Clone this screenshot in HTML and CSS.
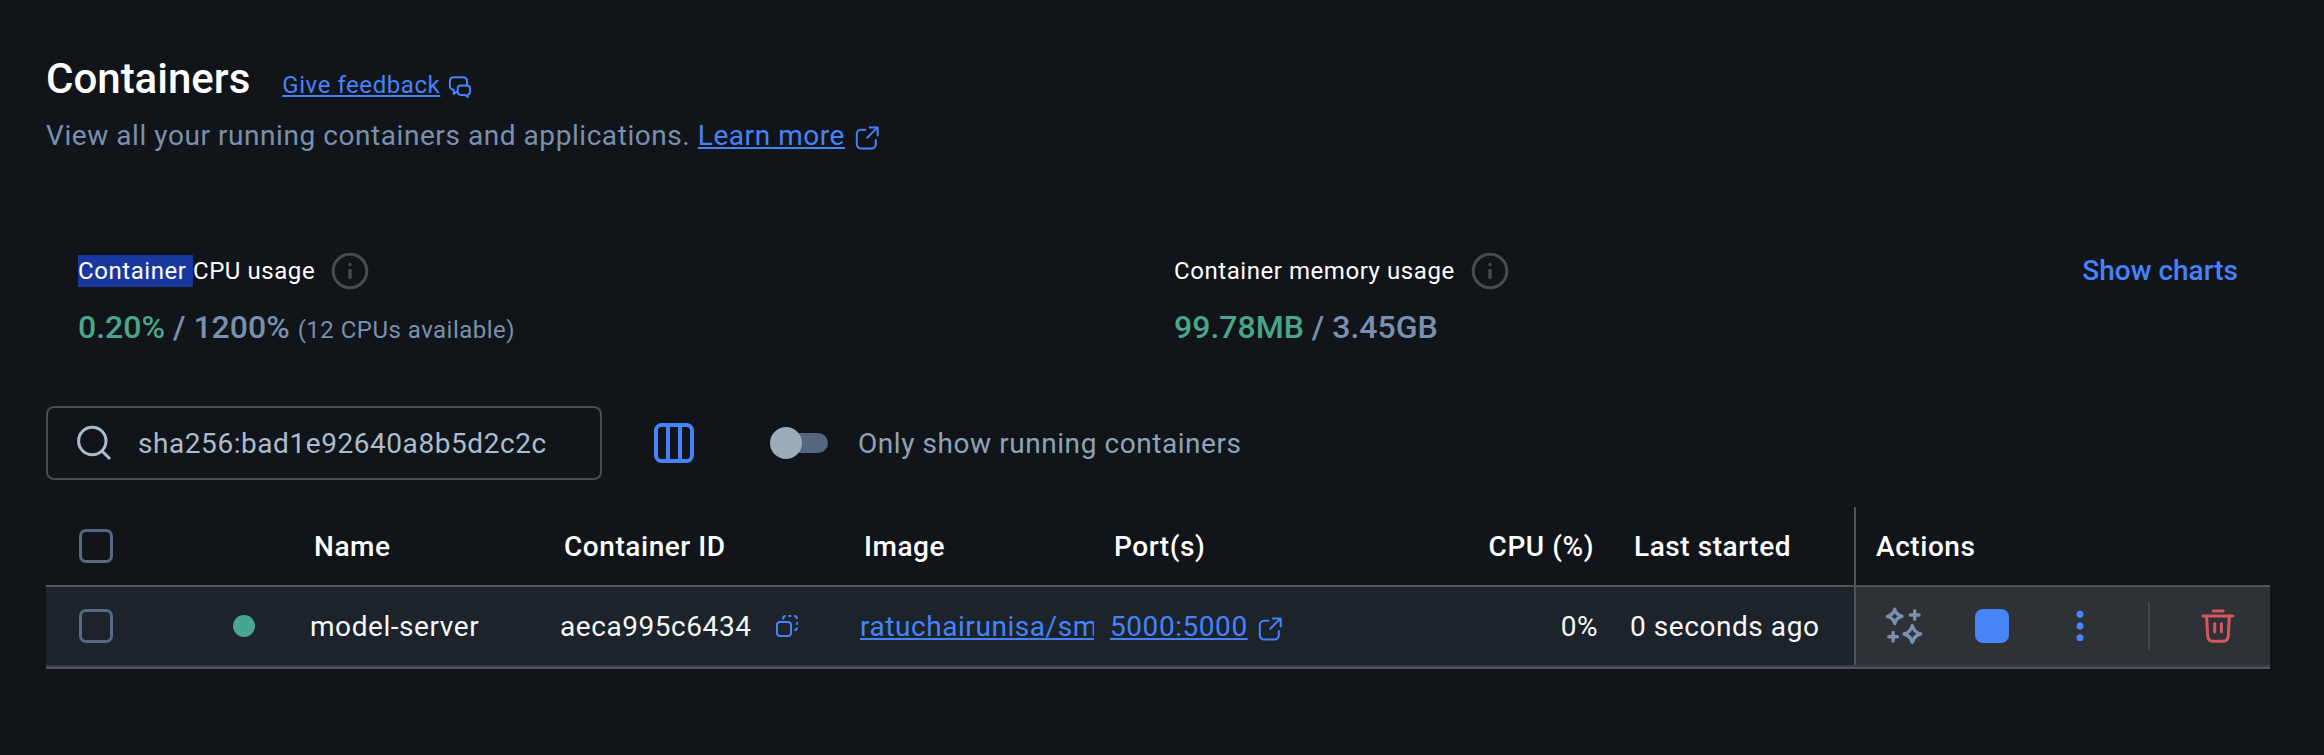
FILE: index.html
```html
<!DOCTYPE html>
<html lang="en">
<head>
<meta charset="utf-8">
<title>Containers</title>
<link rel="stylesheet" href="styles.css">
</head>
<body>
<main class="page">
  <header class="header">
    <div class="title-row">
      <h1 class="title">Containers</h1>
      <a class="link feedback">Give feedback</a>
      <svg class="icon-feedback" viewBox="0 0 24 24" width="24" height="24"><path d="M9 16.5 L5.7 19 V14.8 C3 14.4 1.9 13 1.9 11 V6.2 C1.9 3.5 3.3 2.2 6 2.2 H14.8 C17.6 2.2 19 3.5 19 6.2 V9.8 M12.7 10.6 H19 C21.2 10.6 22.1 11.7 22.1 13.6 V16.6 C22.1 18.5 21.4 19.4 19.8 19.7 V22 L16.8 19.9 H12.7 C10.6 19.9 9.7 18.8 9.7 16.8 V13.6 C9.7 11.7 10.6 10.6 12.7 10.6 Z"/></svg>
    </div>
    <p class="subtitle">View all your running containers and applications. <a class="link">Learn more</a><svg class="icon-ext" viewBox="0 0 24 24" width="24" height="24"><path d="M10.5 3.8H6a4.2 4.2 0 0 0-4.2 4.2v10.2A4.2 4.2 0 0 0 6 22.4h10.6a4.2 4.2 0 0 0 4.2-4.2V14M12.2 11.8 22.4 1.6M14.8 1.4h7.9v8.2"/></svg></p>
  </header>

  <section class="usage">
    <div class="metric">
      <div class="metric-label"><span><mark class="selected">Container </mark>CPU usage</span><svg class="icon-info" viewBox="0 0 40 40" width="40" height="40"><circle cx="20" cy="20" r="16.8"/><path d="M20 19.5v7M20 13.5v.1"/></svg></div>
      <div class="metric-value"><span class="used">0.20%</span> / 1200% <small class="note">(12 CPUs available)</small></div>
    </div>
    <div class="metric">
      <div class="metric-label"><span>Container memory usage</span><svg class="icon-info" viewBox="0 0 40 40" width="40" height="40"><circle cx="20" cy="20" r="16.8"/><path d="M20 19.5v7M20 13.5v.1"/></svg></div>
      <div class="metric-value"><span class="used">99.78MB</span> / 3.45GB</div>
    </div>
    <a class="show-charts">Show charts</a>
  </section>

  <section class="toolbar">
    <div class="search">
      <svg class="icon-search" viewBox="0 0 36 36" width="36" height="36"><circle cx="16.3" cy="16" r="13.7"/><path d="M26 26l8 8"/></svg>
      <span>sha256:bad1e92640a8b5d2c2c</span>
    </div>
    <svg class="icon-columns" viewBox="0 0 40 40" width="40" height="40"><rect x="2" y="2" width="36" height="36" rx="5.5"/><path d="M14 2v36M26 2v36"/></svg>
    <div class="switch"><span class="thumb"></span></div>
    <span class="switch-label">Only show running containers</span>
  </section>

  <section class="table">
    <div class="row head">
      <div class="cell"><span class="checkbox"></span></div>
      <div class="cell"></div>
      <div class="cell">Name</div>
      <div class="cell">Container ID</div>
      <div class="cell">Image</div>
      <div class="cell">Port(s)</div>
      <div class="cell right">CPU (%)</div>
      <div class="cell">Last started</div>
      <div class="cell actions">Actions</div>
    </div>
    <div class="row item">
      <div class="cell"><span class="checkbox"></span></div>
      <div class="cell"><span class="status"></span></div>
      <div class="cell">model-server</div>
      <div class="cell">aeca995c6434<svg class="icon-copy" viewBox="0 0 24 24" width="24" height="24"><rect x="2" y="8" width="14" height="14" rx="3"/><path d="M8 5.5V4.8Q8 2 10.7 2M13.4 2h2.8M19 2Q22 2 22 5M22 8v2.8M22 13.4Q22 16 19.3 16"/></svg></div>
      <div class="cell image"><a class="link">ratuchairunisa/sm</a></div>
      <div class="cell"><a class="link">5000:5000</a><svg class="icon-ext" viewBox="0 0 24 24" width="24" height="24"><path d="M10.5 3.8H6a4.2 4.2 0 0 0-4.2 4.2v10.2A4.2 4.2 0 0 0 6 22.4h10.6a4.2 4.2 0 0 0 4.2-4.2V14M12.2 11.8 22.4 1.6M14.8 1.4h7.9v8.2"/></svg></div>
      <div class="cell right">0%</div>
      <div class="cell">0 seconds ago</div>
      <div class="cell actions">
        <svg class="icon-sparkle" viewBox="0 0 38 38" width="38" height="38"><path d="M9.7 2.2Q11 8 17 9.4Q11 10.8 9.7 16.6Q8.4 10.8 2.4 9.4Q8.4 8 9.7 2.2ZM27.3 18.6Q29 25.2 35.5 27Q29 28.8 27.3 35.4Q25.6 28.8 19.1 27Q25.6 25.2 27.3 18.6ZM29.7 3.7v8.6M25.4 8H34M8.1 25.5v8.6M3.8 29.8h8.6"/></svg>
        <span class="stop"></span>
        <svg class="icon-more" viewBox="0 0 8 34" width="8" height="34"><circle cx="4" cy="5.3" r="3.5"/><circle cx="4" cy="17" r="3.5"/><circle cx="4" cy="28.7" r="3.5"/></svg>
        <span class="divider"></span>
        <svg class="icon-trash" viewBox="0 0 34 34" width="34" height="34"><path d="M12.2 1.9h10M2 7h30M5.6 7l1 19.6Q7 32.2 12 32.2h10Q27 32.2 27.3 26.6L28.3 7M13.7 14.5v8.3M20.4 14.5v8.3"/></svg>
      </div>
    </div>
  </section>
</main>
</body>
</html>
```
FILE: styles.css
```css
* { box-sizing: border-box; }

body {
  margin: 0;
  background: #111519;
  color: #fff;
  font-family: Roboto, sans-serif;
  font-size: 28px;
  letter-spacing: 0.02em;
}

svg {
  display: block;
  flex: none;
  fill: none;
  stroke: #4583fa;
  stroke-width: 2;
  stroke-linecap: round;
  stroke-linejoin: round;
}

.page {
  width: 2324px;
  height: 755px;
  padding: 51px 54px 0 46px;
  overflow: hidden;
}

.link {
  color: #4583fa;
  text-decoration: underline;
  text-decoration-thickness: 2px;
  text-decoration-skip-ink: none;
  text-underline-offset: 2px;
}

.header { height: 196px; }

.title-row {
  display: flex;
  align-items: baseline;
  height: 64px;
}

.title {
  margin: 0 32px 0 0;
  font-size: 42px;
  font-weight: 500;
  line-height: 56px;
  letter-spacing: 0;
}

.feedback { font-size: 24px; }
.icon-feedback { margin-left: 8px; align-self: flex-start; margin-top: 24px; }

.subtitle {
  display: flex;
  align-items: center;
  margin: 0;
  line-height: 42px;
  color: #7990ae;
  white-space: pre;
}

.subtitle .icon-ext { margin: 4px 0 0 10px; }

.usage {
  display: grid;
  grid-template-columns: 1096px 1fr auto;
  height: 159px;
  padding: 0 32px;
}

.metric-label {
  display: flex;
  align-items: center;
  height: 48px;
  gap: 15px;
  font-size: 24px;
  line-height: 32px;
  white-space: pre;
}

.selected {
  display: inline-block;
  background: #1838a0;
  color: #fff;
}

.icon-info { stroke: #484c51; stroke-width: 3; }
.icon-info path { stroke-width: 3.4; }

.metric-value {
  display: flex;
  align-items: baseline;
  margin-top: 12px;
  font-size: 32px;
  font-weight: 500;
  line-height: 40px;
  letter-spacing: 0;
  color: #7990ae;
  white-space: pre;
}

.used { color: #4aa58b; }
.note { font-size: 24px; font-weight: 400; letter-spacing: 0.02em; }

.show-charts {
  font-weight: 500;
  line-height: 48px;
  letter-spacing: 0;
  color: #4583fa;
}

.toolbar {
  display: flex;
  align-items: center;
  height: 74px;
  margin-bottom: 27px;
}

.search {
  display: flex;
  align-items: center;
  gap: 26px;
  width: 556px;
  height: 74px;
  margin-right: 52px;
  padding-left: 28px;
  border: 2px solid #4a4c4f;
  border-radius: 8px;
  color: #acbccd;
}

.icon-search { stroke: #acbccd; stroke-width: 3; stroke-linecap: butt; }
.icon-columns { stroke-width: 4; stroke-linecap: butt; }

.switch {
  width: 52px;
  height: 20px;
  margin-left: 82px;
  border-radius: 10px;
  background: #55677f;
}

.thumb {
  display: block;
  width: 32px;
  height: 32px;
  margin: -6px 0 0 -6px;
  border-radius: 50%;
  background: #9babba;
}

.switch-label { margin-left: 30px; color: #8ea3b8; }

.table { width: 2224px; border-bottom: 2px solid #535353; }

.row {
  display: grid;
  grid-template-columns: 171px 89px 250px 300px 250px 292px 200px 256px 416px;
}

.head {
  height: 80px;
  border-bottom: 2px solid #535353;
  font-weight: 500;
}

.item {
  height: 80px;
  background: #1c232a;
  border-bottom: 2px solid #334052;
  color: #f7f7f7;
}

.cell {
  display: flex;
  align-items: center;
  min-width: 0;
  padding-left: 4px;
  white-space: nowrap;
}

.head .cell { padding-left: 8px; }
.row .cell:first-child { padding-left: 33px; }
.right { justify-content: flex-end; }
.head .right { padding-right: 4px; }

.item .cell:nth-child(8) { padding-left: 32px; }
.head .cell:nth-child(8) { padding-left: 36px; }

.actions { border-left: 2px solid #535355; }
.head .actions { padding-left: 20px; }
.item .actions { padding-left: 29px; background: #2e3135; }

.checkbox {
  width: 34px;
  height: 34px;
  border: 3px solid #566980;
  border-radius: 7px;
}

.status {
  width: 22px;
  height: 22px;
  margin-left: 12px;
  border-radius: 50%;
  background: #4aa58f;
}

.icon-copy { margin-left: 23px; stroke-linecap: butt; }

.image { overflow: hidden; margin-right: 12px; }
.item .icon-ext { margin: 6px 0 0 10px; }

.icon-sparkle { stroke: #7990ae; stroke-width: 3.4; }

.stop {
  width: 34px;
  height: 34px;
  margin-left: 52px;
  border-radius: 8px;
  background: #4684f8;
}

.icon-more { margin-left: 67px; fill: #4684f8; stroke: none; }

.divider {
  width: 2px;
  height: 48px;
  margin-left: 64px;
  background: #42464b;
}

.icon-trash { margin-left: 51px; stroke: #d6585f; stroke-width: 3; }
```
